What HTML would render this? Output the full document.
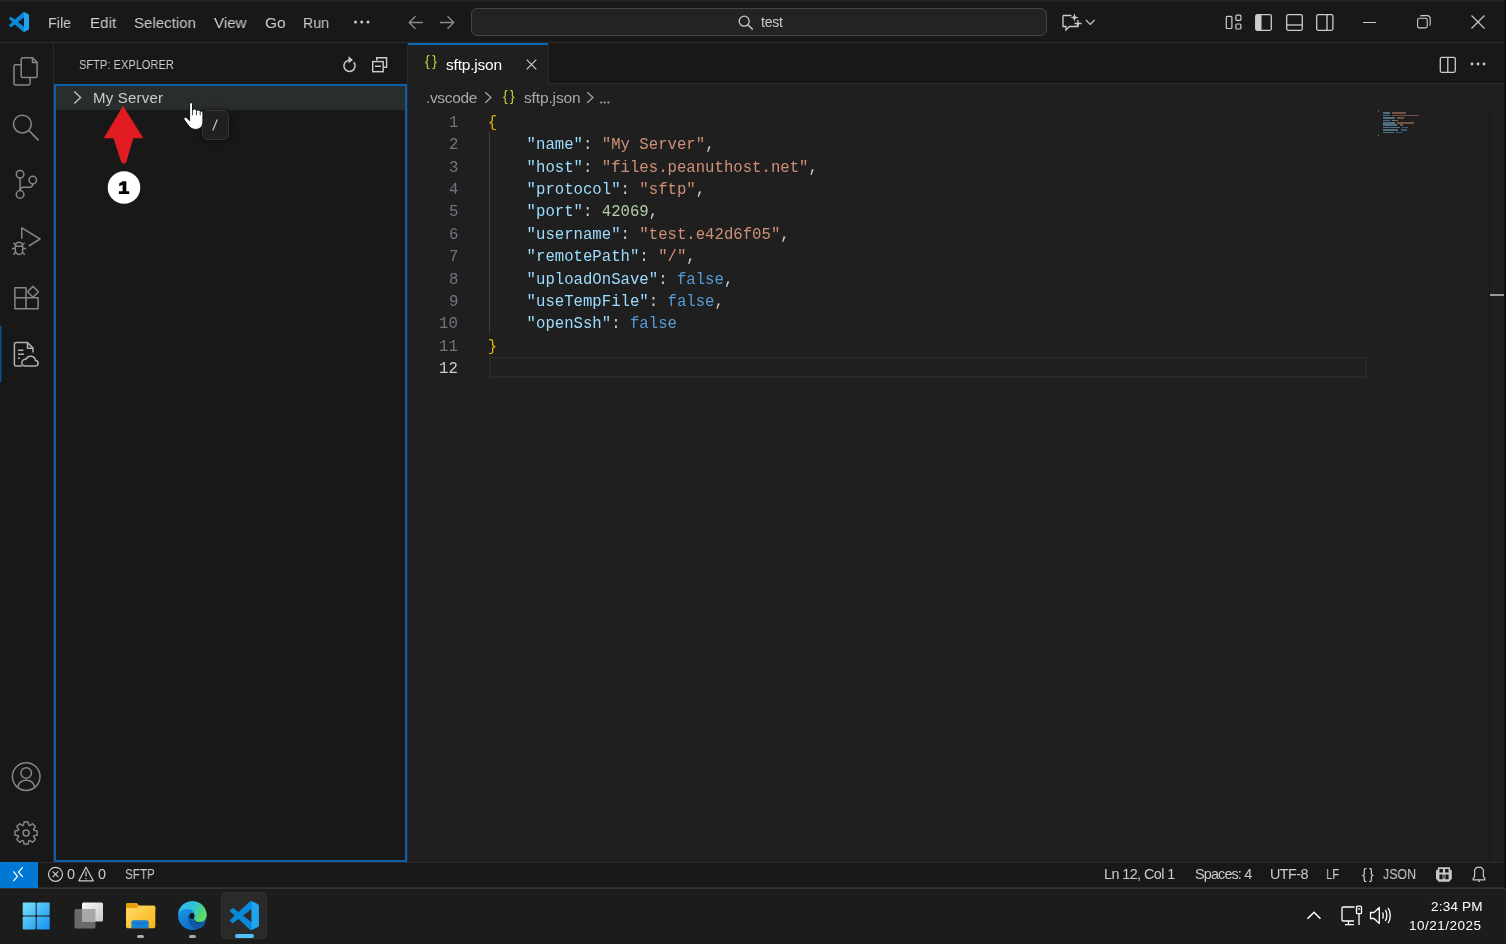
<!DOCTYPE html>
<html><head><meta charset="utf-8">
<style>
html,body{margin:0;padding:0}
body{width:1506px;height:944px;overflow:hidden;position:relative;background:#181818;font-family:"Liberation Sans",sans-serif;color:#cccccc}
.a{position:absolute}
.t{position:absolute;white-space:pre;line-height:1;font-family:"Liberation Sans",sans-serif;will-change:transform}
.m{position:absolute;white-space:pre;line-height:1;font-family:"Liberation Mono",monospace;will-change:transform}
svg{position:absolute;overflow:visible}
</style></head><body>
<!-- top strip -->
<div class="a" style="left:0;top:0;width:1506px;height:2px;background:#232228"></div>
<!-- title bar -->
<div class="a" style="left:0;top:2px;width:1506px;height:40px;background:#181818"></div>
<div class="a" style="left:0;top:42px;width:1506px;height:1px;background:#2b2b2b"></div>

<!-- activity bar -->
<div class="a" style="left:0;top:43px;width:53px;height:819px;background:#181818"></div>
<div class="a" style="left:53px;top:43px;width:1px;height:819px;background:#2b2b2b"></div>

<!-- sidebar -->
<div class="a" style="left:54px;top:43px;width:353px;height:819px;background:#181818"></div>
<div class="a" style="left:407px;top:43px;width:1px;height:819px;background:#2b2b2b"></div>

<!-- editor -->
<div class="a" style="left:408px;top:84px;width:1098px;height:778px;background:#1f1f1f"></div>
<div class="a" style="left:408px;top:43px;width:1098px;height:41px;background:#181818"></div>
<div class="a" style="left:408px;top:83px;width:1098px;height:1px;background:#2b2b2b"></div>

<!-- status bar -->
<div class="a" style="left:0;top:862px;width:1506px;height:26px;background:#181818"></div>
<div class="a" style="left:0;top:862px;width:1506px;height:1px;background:#2b2b2b"></div>
<div class="a" style="left:0;top:887px;width:1506px;height:1px;background:#2b2b2b"></div>

<!-- taskbar -->
<div class="a" style="left:0;top:888px;width:1506px;height:56px;background:#1c1c1c"></div>
<div class="a" style="left:0;top:888px;width:1506px;height:1px;background:#333333"></div>


<!-- ===== TITLE BAR CONTENT ===== -->
<svg style="left:9px;top:12px" width="20" height="20" viewBox="0 0 100 100"><path d="M96.46 10.8L75.86.87a6.2 6.2 0 0 0-7.1 1.2L29.55 38.1 12.47 25.1a4.14 4.14 0 0 0-5.3.24l-5.5 5a4.14 4.14 0 0 0 0 6.12L16.5 50 1.66 63.54a4.14 4.14 0 0 0 0 6.12l5.5 5a4.14 4.14 0 0 0 5.3.24l17.08-12.96 39.2 35.76a6.2 6.2 0 0 0 7.1 1.2l20.6-9.92A6.2 6.2 0 0 0 100 83.4V16.6a6.2 6.2 0 0 0-3.54-5.8zM75 72.7L45.27 50 75 27.3z" fill="#0a86d6"/><path d="M75 0.5L96.46 10.8A6.2 6.2 0 0 1 100 16.6V83.4A6.2 6.2 0 0 1 96.46 89.2L75 99.5Z" fill="#21a3f0"/></svg>
<div id="mFile" class="t" style="left:47.98px;top:14.60px;font-size:15.5px;color:#cccccc;letter-spacing:0px;transform:scaleX(0.9259);transform-origin:0 0">File</div>
<div id="mEdit" class="t" style="left:89.90px;top:14.60px;font-size:15.5px;color:#cccccc;letter-spacing:0px;transform:scaleX(0.9786);transform-origin:0 0">Edit</div>
<div id="mSel" class="t" style="left:134.23px;top:14.60px;font-size:15.5px;color:#cccccc;letter-spacing:0px;transform:scaleX(0.9707);transform-origin:0 0">Selection</div>
<div id="mView" class="t" style="left:213.92px;top:14.60px;font-size:15.5px;color:#cccccc;letter-spacing:0px;transform:scaleX(0.9781);transform-origin:0 0">View</div>
<div id="mGo" class="t" style="left:264.90px;top:14.60px;font-size:15.5px;color:#cccccc;letter-spacing:0px;transform:scaleX(0.9848);transform-origin:0 0">Go</div>
<div id="mRun" class="t" style="left:303.39px;top:14.60px;font-size:15.5px;color:#cccccc;letter-spacing:0px;transform:scaleX(0.9151);transform-origin:0 0">Run</div>
<svg style="left:354px;top:20px" width="16" height="4"><circle cx="1.5" cy="2" r="1.5" fill="#cccccc"/><circle cx="7.75" cy="2" r="1.5" fill="#cccccc"/><circle cx="14" cy="2" r="1.5" fill="#cccccc"/></svg>
<!-- nav arrows -->
<svg style="left:408px;top:15px" width="16" height="15" viewBox="0 0 16 15"><path d="M15 7.5H1.5M7.5 1.2L1.2 7.5l6.3 6.3" stroke="#8b8b8b" stroke-width="1.3" fill="none"/></svg>
<svg style="left:439px;top:15px" width="16" height="15" viewBox="0 0 16 15"><path d="M1 7.5h13.5M8.5 1.2l6.3 6.3-6.3 6.3" stroke="#8b8b8b" stroke-width="1.3" fill="none"/></svg>
<!-- search box -->
<div class="a" style="left:471px;top:8px;width:574px;height:26px;border:1px solid #444444;border-radius:6px;background:#232323"></div>
<svg style="left:738px;top:15px" width="17" height="15" viewBox="0 0 17 15"><circle cx="6.2" cy="6.2" r="5" stroke="#cccccc" stroke-width="1.3" fill="none"/><path d="M9.8 9.8l5 4.8" stroke="#cccccc" stroke-width="1.4"/></svg>
<div id="sTest" class="t" style="left:761.30px;top:15.10px;font-size:14px;color:#cccccc;letter-spacing:-0.200px">test</div>
<!-- copilot chat icon -->
<svg style="left:1062px;top:12px" width="36" height="20" viewBox="0 0 36 20"><path d="M1 3.5h8.5M1 3.5v11h3v3.5l3.5-3.5h8v-2.5" stroke="#cccccc" stroke-width="1.3" fill="none"/><path d="M12.5 1.2l1 3.2 3.2 1-3.2 1-1 3.2-1-3.2-3.2-1 3.2-1z" fill="#cccccc"/><path d="M16 8v7M12.5 11.5h7" stroke="#cccccc" stroke-width="1.3"/><path d="M24 8l4.3 4.3 4.3-4.3" stroke="#cccccc" stroke-width="1.2" fill="none"/></svg>
<!-- layout icons -->
<svg style="left:1225px;top:14px" width="17" height="16" viewBox="0 0 17 16" fill="none" stroke="#cccccc" stroke-width="1.2"><rect x="1.3" y="2.3" width="5.6" height="12.2" rx="1"/><rect x="10.9" y="1.2" width="5" height="5.2" rx="1"/><rect x="10.9" y="10" width="5" height="5" rx="1"/></svg>
<svg style="left:1255px;top:14px" width="17" height="17" viewBox="0 0 17 17"><rect x="0.7" y="0.7" width="15.6" height="15.6" rx="1.5" stroke="#cccccc" stroke-width="1.3" fill="none"/><rect x="1" y="1" width="5.5" height="15" fill="#cccccc"/></svg>
<svg style="left:1286px;top:14px" width="17" height="17" viewBox="0 0 17 17"><rect x="0.7" y="0.7" width="15.6" height="15.6" rx="1.5" stroke="#cccccc" stroke-width="1.3" fill="none"/><path d="M1 11h15" stroke="#cccccc" stroke-width="1.3"/></svg>
<svg style="left:1316px;top:14px" width="18" height="17" viewBox="0 0 18 17"><rect x="0.7" y="0.7" width="16.2" height="15.6" rx="1.5" stroke="#cccccc" stroke-width="1.3" fill="none"/><path d="M11 1v15" stroke="#cccccc" stroke-width="1.3"/></svg>
<!-- window controls -->
<div class="a" style="left:1363px;top:22px;width:13px;height:1px;background:#cccccc"></div>
<svg style="left:1417px;top:15px" width="14" height="14" viewBox="0 0 14 14"><rect x="0.6" y="3.3" width="9.6" height="9.6" rx="1.6" stroke="#cccccc" stroke-width="1.1" fill="none"/><path d="M3.2 1.2c.4-.4 1-.6 1.6-.6h5.2c1.8 0 3.2 1.4 3.2 3.2v5.2c0 .6-.2 1.2-.6 1.6" stroke="#cccccc" stroke-width="1.1" fill="none"/></svg>
<svg style="left:1471px;top:15px" width="14" height="14" viewBox="0 0 14 14"><path d="M0.5 0.5l13 13M13.5 0.5l-13 13" stroke="#cccccc" stroke-width="1.1"/></svg>


<!-- ===== ACTIVITY BAR ICONS ===== -->
<svg style="left:0;top:0" width="54" height="862" fill="none" stroke="#868686" stroke-width="1.5" stroke-linejoin="round">
 <path d="M21.2 64.8H15.5a1.5 1.5 0 0 0-1.5 1.5V83.4a1.5 1.5 0 0 0 1.5 1.5H28.6a1.5 1.5 0 0 0 1.5-1.5V77.6"/>
 <path d="M22.7 57.8H32.5L37.1 62.4V76.1a1.5 1.5 0 0 1-1.5 1.5H22.7a1.5 1.5 0 0 1-1.5-1.5V59.3a1.5 1.5 0 0 1 1.5-1.5z"/>
 <path d="M32.5 58.5V62.4H36.4" />
 <circle cx="22.4" cy="124.1" r="8.9"/>
 <path d="M28.8 130.5L38.6 140.3" stroke-width="1.7"/>
 <circle cx="20.1" cy="174.3" r="3.8"/>
 <circle cx="20.1" cy="194.4" r="3.8"/>
 <circle cx="32.8" cy="180.1" r="3.8"/>
 <path d="M20.1 178.1V190.6"/>
 <path d="M32.8 183.9C32.8 186.5 31 187.3 28 187.3H23.5C21.3 187.3 20.1 188.3 20.1 190"/>
 <path d="M21.8 238.8V227.8L40 239L28.8 246"/>
 <path d="M15.3 246.5a3.7 4.2 0 0 1 7.4 0V250.5a3.7 4 0 0 1-7.4 0Z"/>
 <path d="M16 244.8l-2.6-2M22 244.8l2.6-2M15 248.5H11.8M23 248.5H26.2M15.8 252.3l-2.6 2.3M22.2 252.3l2.6 2.3M15.3 246.3H22.7"/>
 <path d="M14.9 287.7H26V308.7H14.9Z M14.9 297.8H38.1V308.7H26"/>
 <path d="M27.6 291.8L33 286.4L38.4 291.8L33 297.2Z"/>
 <circle cx="26.2" cy="776.6" r="13.8"/>
 <circle cx="26.2" cy="773" r="5.3"/>
 <path d="M18 786.8C18.8 782.3 22 780.2 26.2 780.2S33.6 782.3 34.4 786.8"/>
 <path d="M33.95 830.31 L37.22 831.01 L37.22 834.99 L33.95 835.69 L33.55 836.65 L35.37 839.46 L32.56 842.27 L29.75 840.45 L28.79 840.85 L28.09 844.12 L24.11 844.12 L23.41 840.85 L22.45 840.45 L19.64 842.27 L16.83 839.46 L18.65 836.65 L18.25 835.69 L14.98 834.99 L14.98 831.01 L18.25 830.31 L18.65 829.35 L16.83 826.54 L19.64 823.73 L22.45 825.55 L23.41 825.15 L24.11 821.88 L28.09 821.88 L28.79 825.15 L29.75 825.55 L32.56 823.73 L35.37 826.54 L33.55 829.35Z"/>
 <circle cx="26.1" cy="833" r="3"/>
</svg>
<div class="a" style="left:0;top:326px;width:1px;height:56px;background:#0d4f8a"></div><div class="a" style="left:1px;top:326px;width:1px;height:56px;background:#123552"></div>
<svg style="left:0;top:0" width="54" height="862" fill="none" stroke="#b0b0b0" stroke-width="1.5" stroke-linejoin="round">
 <path d="M22 366H16a1.6 1.6 0 0 1-1.6-1.6V344.2a1.6 1.6 0 0 1 1.6-1.6H27.5L33 348.1V352.5"/>
 <path d="M27.5 342.8V348.3H33"/>
 <path d="M18 350.2H23.5M18 354.2H24M18 358.2H20"/>
 <path d="M24.5 366H35.2a2.7 2.7 0 0 0 .3-5.4a5 5 0 0 0-9.6-1.3a3.4 3.4 0 0 0-1.4 6.7Z"/>
</svg>

<!-- ===== SIDEBAR ===== -->
<div id="sbTitle" class="t" style="left:78.52px;top:57.85px;font-size:13.3px;color:#cccccc;letter-spacing:0.1px;transform:scaleX(0.8240);transform-origin:0 0">SFTP: EXPLORER</div>
<svg style="left:340px;top:54px" width="18" height="20" viewBox="0 0 18 20" fill="none"><path d="M13.8 8.3A5.6 5.6 0 1 1 8.8 6.3" stroke="#cccccc" stroke-width="1.5"/><path d="M8.5 2.3L13 6.1L8.5 9.3Z" fill="#cccccc"/></svg>
<svg style="left:371px;top:56px" width="17" height="17" viewBox="0 0 17 17" fill="none" stroke="#cccccc" stroke-width="1.4"><path d="M5.7 4.5V1.7H15.6V11.2H12.5"/><rect x="1.7" y="5.6" width="10.5" height="10.1"/><path d="M4 10.3H10"/></svg>
<!-- focus border -->
<div class="a" style="left:54px;top:84px;width:349px;height:774px;border:2px solid #0d60a8"></div>
<div class="a" style="left:56px;top:86px;width:349px;height:24px;background:#2a2d2e"></div>
<svg style="left:72px;top:90px" width="12" height="15" viewBox="0 0 12 15" fill="none"><path d="M2.3 1.5L8.6 7.5L2.3 13.5" stroke="#cccccc" stroke-width="1.2"/></svg>
<div id="sbServer" class="t" style="left:92.90px;top:90.25px;font-size:15px;color:#cccccc;letter-spacing:0.211px">My Server</div>


<!-- ===== TABS ===== -->
<div class="a" style="left:408px;top:43px;width:140px;height:41px;background:#1f1f1f"></div>
<div class="a" style="left:408px;top:43px;width:140px;height:2px;background:#0a67b5"></div>
<div class="a" style="left:548px;top:43px;width:1px;height:40px;background:#2b2b2b"></div>
<div id="tabIcon" class="t" style="left:425.20px;top:54.35px;font-size:14px;color:#cbcb41;letter-spacing:2.450px">{}</div>
<div id="tabName" class="t" style="left:446.20px;top:56.90px;font-size:15.5px;color:#ffffff;letter-spacing:-0.211px">sftp.json</div>
<svg style="left:526px;top:59px" width="11" height="11" viewBox="0 0 11 11"><path d="M0.7 0.7l9.6 9.6M10.3 0.7l-9.6 9.6" stroke="#cccccc" stroke-width="1.2"/></svg>
<svg style="left:1439px;top:56px" width="18" height="18" viewBox="0 0 18 18" fill="none" stroke="#cccccc" stroke-width="1.3"><rect x="1.3" y="1.3" width="15" height="15" rx="1.5"/><path d="M8.8 1.5V16"/></svg>
<svg style="left:1470px;top:62px" width="16" height="4"><circle cx="2" cy="2" r="1.4" fill="#cccccc"/><circle cx="8" cy="2" r="1.4" fill="#cccccc"/><circle cx="14" cy="2" r="1.4" fill="#cccccc"/></svg>
<!-- ===== BREADCRUMBS ===== -->
<div id="bcVs" class="t" style="left:426.00px;top:89.85px;font-size:15.5px;color:#a9a9a9;letter-spacing:-0.357px">.vscode</div>
<svg style="left:484px;top:91px" width="9" height="13" viewBox="0 0 9 13" fill="none"><path d="M1.2 1.2l5.8 5.3-5.8 5.3" stroke="#a9a9a9" stroke-width="1.2"/></svg>
<div id="bcIcon" class="t" style="left:503.30px;top:89.25px;font-size:14px;color:#cbcb41;letter-spacing:2.200px">{}</div>
<div id="bcName" class="t" style="left:523.50px;top:90.20px;font-size:15.5px;color:#a9a9a9;letter-spacing:-0.133px">sftp.json</div>
<svg style="left:586px;top:91px" width="9" height="13" viewBox="0 0 9 13" fill="none"><path d="M1.2 1.2l5.8 5.3-5.8 5.3" stroke="#a9a9a9" stroke-width="1.2"/></svg>
<svg style="left:600px;top:101px" width="10" height="3"><circle cx="1.2" cy="1.5" r="1.1" fill="#a9a9a9"/><circle cx="4.8" cy="1.5" r="1.1" fill="#a9a9a9"/><circle cx="8.4" cy="1.5" r="1.1" fill="#a9a9a9"/></svg>
<!-- ===== EDITOR BODY ===== -->
<div class="a" style="left:489px;top:357px;width:878px;height:21px;border:2px solid #282828;box-sizing:border-box"></div>
<div class="a" style="left:489px;top:132px;width:1px;height:201px;background:#404040"></div>
<div id="code1" class="m" style="left:489.4px;top:115.89px;font-size:15.67px"><span style="color:#dcb400;position:relative;left:-1.3px">{</span></div>
<div id="ln1" class="m" style="left:448.6px;top:115.89px;font-size:15.67px;color:#6e7681">1</div>
<div id="code2" class="m" style="left:489.4px;top:138.29px;font-size:15.67px"><span style="color:#cccccc">    </span><span style="color:#9cdcfe">&quot;name&quot;</span><span style="color:#cccccc">: </span><span style="color:#ce9178">&quot;My Server&quot;</span><span style="color:#cccccc">,</span></div>
<div id="ln2" class="m" style="left:448.6px;top:138.29px;font-size:15.67px;color:#6e7681">2</div>
<div id="code3" class="m" style="left:489.4px;top:160.69px;font-size:15.67px"><span style="color:#cccccc">    </span><span style="color:#9cdcfe">&quot;host&quot;</span><span style="color:#cccccc">: </span><span style="color:#ce9178">&quot;files.peanuthost.net&quot;</span><span style="color:#cccccc">,</span></div>
<div id="ln3" class="m" style="left:448.6px;top:160.69px;font-size:15.67px;color:#6e7681">3</div>
<div id="code4" class="m" style="left:489.4px;top:183.09px;font-size:15.67px"><span style="color:#cccccc">    </span><span style="color:#9cdcfe">&quot;protocol&quot;</span><span style="color:#cccccc">: </span><span style="color:#ce9178">&quot;sftp&quot;</span><span style="color:#cccccc">,</span></div>
<div id="ln4" class="m" style="left:448.6px;top:183.09px;font-size:15.67px;color:#6e7681">4</div>
<div id="code5" class="m" style="left:489.4px;top:205.49px;font-size:15.67px"><span style="color:#cccccc">    </span><span style="color:#9cdcfe">&quot;port&quot;</span><span style="color:#cccccc">: </span><span style="color:#b5cea8">42069</span><span style="color:#cccccc">,</span></div>
<div id="ln5" class="m" style="left:448.6px;top:205.49px;font-size:15.67px;color:#6e7681">5</div>
<div id="code6" class="m" style="left:489.4px;top:227.89px;font-size:15.67px"><span style="color:#cccccc">    </span><span style="color:#9cdcfe">&quot;username&quot;</span><span style="color:#cccccc">: </span><span style="color:#ce9178">&quot;test.e42d6f05&quot;</span><span style="color:#cccccc">,</span></div>
<div id="ln6" class="m" style="left:448.6px;top:227.89px;font-size:15.67px;color:#6e7681">6</div>
<div id="code7" class="m" style="left:489.4px;top:250.29px;font-size:15.67px"><span style="color:#cccccc">    </span><span style="color:#9cdcfe">&quot;remotePath&quot;</span><span style="color:#cccccc">: </span><span style="color:#ce9178">&quot;/&quot;</span><span style="color:#cccccc">,</span></div>
<div id="ln7" class="m" style="left:448.6px;top:250.29px;font-size:15.67px;color:#6e7681">7</div>
<div id="code8" class="m" style="left:489.4px;top:272.69px;font-size:15.67px"><span style="color:#cccccc">    </span><span style="color:#9cdcfe">&quot;uploadOnSave&quot;</span><span style="color:#cccccc">: </span><span style="color:#569cd6">false</span><span style="color:#cccccc">,</span></div>
<div id="ln8" class="m" style="left:448.6px;top:272.69px;font-size:15.67px;color:#6e7681">8</div>
<div id="code9" class="m" style="left:489.4px;top:295.09px;font-size:15.67px"><span style="color:#cccccc">    </span><span style="color:#9cdcfe">&quot;useTempFile&quot;</span><span style="color:#cccccc">: </span><span style="color:#569cd6">false</span><span style="color:#cccccc">,</span></div>
<div id="ln9" class="m" style="left:448.6px;top:295.09px;font-size:15.67px;color:#6e7681">9</div>
<div id="code10" class="m" style="left:489.4px;top:317.49px;font-size:15.67px"><span style="color:#cccccc">    </span><span style="color:#9cdcfe">&quot;openSsh&quot;</span><span style="color:#cccccc">: </span><span style="color:#569cd6">false</span></div>
<div id="ln10" class="m" style="left:439.2px;top:317.49px;font-size:15.67px;color:#6e7681">10</div>
<div id="code11" class="m" style="left:489.4px;top:339.89px;font-size:15.67px"><span style="color:#dcb400;position:relative;left:-1.3px">}</span></div>
<div id="ln11" class="m" style="left:439.2px;top:339.89px;font-size:15.67px;color:#6e7681">11</div>
<div id="code12" class="m" style="left:489.4px;top:362.29px;font-size:15.67px"></div>
<div id="ln12" class="m" style="left:439.2px;top:362.29px;font-size:15.67px;color:#cccccc">12</div>
<!-- minimap -->
<div class="a" style="left:1377.6px;top:110.0px;width:1.2px;height:1.5px;opacity:0.75;background:#707070"></div>
<div class="a" style="left:1382.5px;top:112.4px;width:7.3px;height:1.5px;opacity:0.75;background:#5d8ca6"></div>
<div class="a" style="left:1392.2px;top:112.4px;width:13.4px;height:1.5px;opacity:0.75;background:#8f6652"></div>
<div class="a" style="left:1382.5px;top:114.8px;width:7.3px;height:1.5px;opacity:0.75;background:#5d8ca6"></div>
<div class="a" style="left:1392.2px;top:114.8px;width:26.8px;height:1.5px;opacity:0.75;background:#8f6652"></div>
<div class="a" style="left:1382.5px;top:117.2px;width:12.2px;height:1.5px;opacity:0.75;background:#5d8ca6"></div>
<div class="a" style="left:1397.1px;top:117.2px;width:7.3px;height:1.5px;opacity:0.75;background:#8f6652"></div>
<div class="a" style="left:1382.5px;top:119.6px;width:7.3px;height:1.5px;opacity:0.75;background:#5d8ca6"></div>
<div class="a" style="left:1392.2px;top:119.6px;width:6.1px;height:1.5px;opacity:0.75;background:#7f9470"></div>
<div class="a" style="left:1382.5px;top:122.0px;width:12.2px;height:1.5px;opacity:0.75;background:#5d8ca6"></div>
<div class="a" style="left:1397.1px;top:122.0px;width:17.1px;height:1.5px;opacity:0.75;background:#8f6652"></div>
<div class="a" style="left:1382.5px;top:124.4px;width:14.6px;height:1.5px;opacity:0.75;background:#5d8ca6"></div>
<div class="a" style="left:1399.6px;top:124.4px;width:3.7px;height:1.5px;opacity:0.75;background:#8f6652"></div>
<div class="a" style="left:1382.5px;top:126.8px;width:17.1px;height:1.5px;opacity:0.75;background:#5d8ca6"></div>
<div class="a" style="left:1402.0px;top:126.8px;width:6.1px;height:1.5px;opacity:0.75;background:#3f70a6"></div>
<div class="a" style="left:1382.5px;top:129.2px;width:15.9px;height:1.5px;opacity:0.75;background:#5d8ca6"></div>
<div class="a" style="left:1400.8px;top:129.2px;width:6.1px;height:1.5px;opacity:0.75;background:#3f70a6"></div>
<div class="a" style="left:1382.5px;top:131.6px;width:11.0px;height:1.5px;opacity:0.75;background:#5d8ca6"></div>
<div class="a" style="left:1395.9px;top:131.6px;width:6.1px;height:1.5px;opacity:0.75;background:#3f70a6"></div>
<div class="a" style="left:1377.6px;top:134.0px;width:1.2px;height:1.5px;opacity:0.75;background:#707070"></div>
<!-- scrollbar -->
<div class="a" style="left:1488.5px;top:110px;width:1.2px;height:752px;background:#151618"></div>
<div class="a" style="left:1490px;top:294.3px;width:14px;height:2.2px;background:#9a9a9a"></div>
<div class="a" style="left:1504px;top:0;width:1px;height:888px;background:#141414"></div><div class="a" style="left:1505px;top:0;width:1px;height:888px;background:#0a0a0a"></div>


<!-- ===== STATUS BAR ===== -->
<div class="a" style="left:0;top:862px;width:38px;height:26px;background:#0078d4"></div>
<svg style="left:0;top:860px" width="38" height="28" viewBox="0 860 38 28" fill="none" stroke="#ffffff" stroke-width="1.3" stroke-linecap="round" stroke-linejoin="round"><path d="M13.7 871.8L17.5 876.3L13.7 880.7"/><path d="M22.4 867.6L18.4 872.1L22.4 876.5"/></svg>
<svg style="left:47px;top:866px" width="17" height="17" viewBox="0 0 17 17" fill="none" stroke="#cccccc" stroke-width="1.2"><circle cx="8.5" cy="8.3" r="7"/><path d="M5.6 5.4l5.8 5.8M11.4 5.4l-5.8 5.8"/></svg>
<div id="stE0" class="t" style="left:67px;top:867px;font-size:14.4px;color:#cccccc">0</div>
<svg style="left:78px;top:866px" width="17" height="17" viewBox="0 0 17 17" fill="none" stroke="#cccccc" stroke-width="1.2" stroke-linejoin="round"><path d="M8 1.2L15.3 14.8H0.9Z"/><path d="M8 5.5V10.5M8 12V13.3"/></svg>
<div id="stW0" class="t" style="left:98px;top:867px;font-size:14.4px;color:#cccccc">0</div>
<div id="stSftp" class="t" style="left:125.11px;top:866.70px;font-size:14.4px;color:#cccccc;letter-spacing:0px;transform:scaleX(0.8092);transform-origin:0 0">SFTP</div>
<div id="stLn" class="t" style="left:1104.00px;top:867.45px;font-size:14.4px;color:#cccccc;letter-spacing:-0.583px">Ln 12, Col 1</div>
<div id="stSp" class="t" style="left:1195.00px;top:866.95px;font-size:14.4px;color:#cccccc;letter-spacing:-0.856px">Spaces: 4</div>
<div id="stUtf" class="t" style="left:1270.40px;top:867.05px;font-size:14.4px;color:#cccccc;letter-spacing:-0.580px">UTF-8</div>
<div id="stLf" class="t" style="left:1326.46px;top:867.15px;font-size:14.4px;color:#cccccc;letter-spacing:0px;transform:scaleX(0.7826);transform-origin:0 0">LF</div>
<div id="stBr" class="t" style="left:1361.60px;top:866.50px;font-size:14px;color:#cccccc;letter-spacing:2.350px">{}</div>
<div id="stJson" class="t" style="left:1382.91px;top:867.15px;font-size:14.4px;color:#cccccc;letter-spacing:0px;transform:scaleX(0.8607);transform-origin:0 0">JSON</div>
<svg style="left:0;top:0" width="1506" height="890" viewBox="0 0 1506 890">
 <path d="M1438.2 867.2H1449.8L1450.6 870.2H1451.8V878.8L1449.2 881.8H1438.8L1436 878.8V870.2H1437.3Z" fill="#c8c8c8"/>
 <path d="M1439.4 869H1442.9V872.6H1439.4Z M1445.1 869H1448.6V872.6H1445.1Z M1439.4 874.6H1442.6V879.2H1439.4Z M1445.4 874.6H1448.6V879.2H1445.4Z" fill="#181818"/>
 <path d="M1443.6 874.8V878.6M1444.3 874.8V878.6" stroke="#181818" stroke-width="0.6"/>
</svg>
<svg style="left:0;top:0" width="1506" height="890" viewBox="0 0 1506 890"><path d="M1476.6 867.4H1481.4L1483.4 869.8V876.6L1484.8 878.3V879.9H1473.2V878.3L1474.6 876.6V869.8Z" fill="none" stroke="#c8c8c8" stroke-width="1.2" stroke-linejoin="round"/><path d="M1478 880.5H1480V881.8H1478Z" fill="#c8c8c8"/></svg>

<!-- ===== TASKBAR ===== -->
<svg style="left:22px;top:902px" width="29" height="29" viewBox="0 0 29 29">
 <defs><linearGradient id="wg" gradientUnits="userSpaceOnUse" x1="0" y1="0" x2="28" y2="28"><stop offset="0" stop-color="#7ae3fc"/><stop offset="1" stop-color="#1190f0"/></linearGradient></defs>
 <rect x="0.7" y="0.6" width="13" height="12.9" rx="1" fill="url(#wg)"/>
 <rect x="14.7" y="0.6" width="13" height="12.9" rx="1" fill="url(#wg)"/>
 <rect x="0.7" y="14.5" width="13" height="13" rx="1" fill="url(#wg)"/>
 <rect x="14.7" y="14.5" width="13" height="13" rx="1" fill="url(#wg)"/>
</svg>
<svg style="left:74px;top:902px" width="30" height="28" viewBox="0 0 30 28">
 <rect x="0.5" y="7" width="21" height="19.5" rx="1.5" fill="#6a6a6a"/>
 <defs><linearGradient id="tv" x1="0" y1="0" x2="1" y2="1"><stop offset="0" stop-color="#fafafa"/><stop offset="1" stop-color="#c8c8c8"/></linearGradient></defs>
 <rect x="8" y="0.5" width="21" height="19" rx="1.5" fill="url(#tv)"/>
 <rect x="8" y="7" width="13.5" height="12.5" fill="#a8a8a8"/>
</svg>
<svg style="left:126px;top:902px" width="30" height="28" viewBox="0 0 30 28">
 <defs><linearGradient id="fg" x1="0" y1="0" x2="1" y2="1"><stop offset="0" stop-color="#ffdb6a"/><stop offset="1" stop-color="#f7b512"/></linearGradient></defs>
 <path d="M0 3C0 1.8.8 1 2 1H9.5C10.3 1 10.8 1.3 11.3 1.8L13 3.5H27.5C28.7 3.5 29.3 4.2 29.3 5.2V8H0Z" fill="#f4c02e"/>
 <path d="M0 3C0 1.8.8 1 2 1H9.5C10.3 1 10.8 1.3 11.3 1.8L13 3.5L11.5 5.3C11 5.8 10.5 6 9.8 6H0Z" fill="#e3a00a"/>
 <path d="M0 6.3H10C10.8 6.3 11.3 6 11.8 5.5L13.3 4H27.5C28.6 4 29.3 4.7 29.3 5.8V24.5C29.3 25.5 28.5 26.3 27.5 26.3H1.8C.8 26.3 0 25.5 0 24.5Z" fill="url(#fg)"/>
 <path d="M5.4 26.3V20.2C5.4 19 6.3 18.2 7.4 18.2H20.7C21.8 18.2 22.7 19 22.7 20.2V26.3Z" fill="#1a80d8"/>
 <path d="M8 21.5H20" stroke="#1466b8" stroke-width="0.8"/>
</svg>
<div class="a" style="left:137px;top:935px;width:7px;height:3px;border-radius:2px;background:#aaaaaa"></div>
<svg style="left:177px;top:900px" width="31" height="31" viewBox="0 0 31 31">
 <defs>
  <linearGradient id="eg1" gradientUnits="userSpaceOnUse" x1="3" y1="4" x2="29" y2="18"><stop offset="0" stop-color="#36b8f4"/><stop offset="0.45" stop-color="#2ec2d4"/><stop offset="0.8" stop-color="#52d779"/><stop offset="1" stop-color="#6ae356"/></linearGradient>
  <linearGradient id="eg2" gradientUnits="userSpaceOnUse" x1="2" y1="12" x2="12" y2="30"><stop offset="0" stop-color="#1a90e2"/><stop offset="1" stop-color="#0d6fc4"/></linearGradient>
 </defs>
 <circle cx="15.3" cy="15.6" r="14.3" fill="url(#eg2)"/>
 <path d="M10.8 16.5C10.8 23 14.5 28.3 20 29C24 28.6 26.8 26.5 28.2 23.3C26.5 23.4 24.5 23.6 22.5 23.4C17 23 13.2 20.2 13.2 15.8Z" fill="#0f58a6"/>
 <path d="M1.1 13.4C2.4 6.2 8.3 1.3 15.3 1.3C23.4 1.3 29.6 7.5 29.6 14.6C29.6 19.3 26.2 22.3 21.6 22.3C18.7 22.3 16.9 21.1 16.9 19.3C16.9 18.3 17.7 17.5 17.7 15.6C17.7 12 14.6 9.1 10.6 9.1C6.4 9.1 3 10.9 1.1 13.4Z" fill="url(#eg1)"/>
 <ellipse cx="14.9" cy="15.9" rx="2.5" ry="2.8" fill="#161616"/>
 <path d="M16.2 18.8C17.5 21.8 21 23.2 25.5 23" stroke="#0a2a4a" stroke-width="1.1" fill="none" opacity="0.8"/>
</svg>
<div class="a" style="left:189px;top:935px;width:7px;height:3px;border-radius:2px;background:#aaaaaa"></div>
<div class="a" style="left:221px;top:892px;width:46px;height:47px;border-radius:5px;background:#2a2a2a;box-shadow:inset 0 0 0 1px #303030"></div>
<svg style="left:229.6px;top:901px" width="28.8" height="29.2" viewBox="0 0 100 100" preserveAspectRatio="none">
 <path d="M96.46 10.8L75.86.87a6.2 6.2 0 0 0-7.1 1.2L29.55 38.1 12.47 25.1a4.14 4.14 0 0 0-5.3.24l-5.5 5a4.14 4.14 0 0 0 0 6.12L16.5 50 1.66 63.54a4.14 4.14 0 0 0 0 6.12l5.5 5a4.14 4.14 0 0 0 5.3.24l17.08-12.96 39.2 35.76a6.2 6.2 0 0 0 7.1 1.2l20.6-9.92A6.2 6.2 0 0 0 100 83.4V16.6a6.2 6.2 0 0 0-3.54-5.8zM75 72.7L45.27 50 75 27.3z" fill="#0a8ad6"/>
 <path d="M75 0.5L96.46 10.8A6.2 6.2 0 0 1 100 16.6V83.4A6.2 6.2 0 0 1 96.46 89.2L75 99.5Z" fill="#1fa4ee"/>
</svg>
<div class="a" style="left:235px;top:934px;width:19px;height:4px;border-radius:2px;background:#4cc2ff"></div>
<!-- tray -->
<svg style="left:1306px;top:909px" width="16" height="12" viewBox="0 0 16 12" fill="none"><path d="M1.5 9.8L8 3.3L14.5 9.8" stroke="#ffffff" stroke-width="1.6"/></svg>
<svg style="left:1341px;top:905px" width="22" height="22" viewBox="0 0 22 22" fill="none" stroke="#ffffff" stroke-width="1.3"><path d="M13.5 2H2a1 1 0 0 0-1 1V15a1 1 0 0 0 1 1H13"/><path d="M7.5 16V19.5M4 19.7H13"/><rect x="15.5" y="1.2" width="5" height="7.5" rx="1.2"/><path d="M18 8.7V20"/><path d="M16.8 4H19.2"/></svg>
<svg style="left:1369px;top:906px" width="23" height="19" viewBox="0 0 23 19" fill="none" stroke="#ffffff" stroke-width="1.3" stroke-linejoin="round"><path d="M1.5 6.5H5L10.3 1.5V17.5L5 12.5H1.5Z"/><path d="M13.5 6.5C14.5 7.5 14.5 11.5 13.5 12.5"/><path d="M16.3 4C18.3 6.5 18.3 12.5 16.3 15"/><path d="M19 1.8C22 5.5 22 13.5 19 17.2"/></svg>
<div id="tbTime" class="t" style="left:1431.30px;top:899.80px;font-size:13.5px;color:#ffffff;letter-spacing:0.214px">2:34 PM</div>
<div id="tbDate" class="t" style="left:1409.20px;top:918.60px;font-size:13.5px;color:#ffffff;letter-spacing:0.500px">10/21/2025</div>

<!-- ===== ANNOTATIONS ===== -->
<svg style="left:0;top:0" width="260" height="220" viewBox="0 0 260 220">
 <path d="M123 105.8L143.4 138.2H133.2L126.5 161.5Q123.7 166 121 161.5L113.5 138.2H103.7Z" fill="#e01b22"/>
 <circle cx="124" cy="187.5" r="16.3" fill="#ffffff"/>
</svg>
<svg style="left:0;top:0" width="140" height="200" viewBox="0 0 140 200"><path d="M122.6 181.2H126.3V191.3H129.2V194.1H118.9V191.3H122.6V184.8L119.2 186.3V183.4Z" fill="#000000"/></svg>
<!-- tooltip -->
<div class="a" style="left:202px;top:110px;width:25px;height:28px;border:1.5px solid #363636;border-radius:6px;background:#202020;box-shadow:0 0 6px rgba(0,0,0,0.6)"></div>
<svg style="left:210px;top:118px" width="10" height="14" viewBox="0 0 10 14"><path d="M7.3 1.5L2.7 12.5" stroke="#c8c8c8" stroke-width="1.2"/></svg>
<!-- hand cursor -->
<svg style="left:0;top:0" width="240" height="140" viewBox="0 0 240 140">
 <path d="M189.6 104Q189.6 102.5 191 102.5Q192.5 102.5 192.5 104V110.6Q192.8 109 194.5 109Q196.4 109 196.5 110.8Q196.9 110.1 198.4 110.1Q200 110.1 200.2 111.6Q200.6 111.1 201.5 111.1Q202.9 111.1 202.9 113V122C202.9 126.5 199.6 129.4 195.5 129.4C192.1 129.4 190 127.6 188 125L184.2 119.8Q183.5 118.5 184.5 117.6Q185.7 116.8 186.8 117.8L189.6 120.8Z" fill="#ffffff" stroke="#0a0a0a" stroke-width="0.9" stroke-linejoin="round"/>
 <path d="M192.6 111V115.2M196.5 111.2V115.2M200.2 112V115.2" stroke="#0a0a0a" stroke-width="0.8"/>
</svg>

</body></html>
